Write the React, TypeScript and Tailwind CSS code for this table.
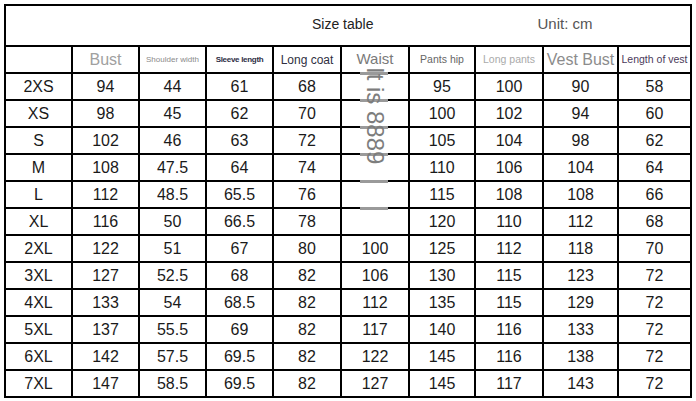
import React from "react";

const rows: (string | null)[][] = [
  ["2XS", "94", "44", "61", "68", null, "95", "100", "90", "58"],
  ["XS", "98", "45", "62", "70", null, "100", "102", "94", "60"],
  ["S", "102", "46", "63", "72", null, "105", "104", "98", "62"],
  ["M", "108", "47.5", "64", "74", null, "110", "106", "104", "64"],
  ["L", "112", "48.5", "65.5", "76", null, "115", "108", "108", "66"],
  ["XL", "116", "50", "66.5", "78", null, "120", "110", "112", "68"],
  ["2XL", "122", "51", "67", "80", "100", "125", "112", "118", "70"],
  ["3XL", "127", "52.5", "68", "82", "106", "130", "115", "123", "72"],
  ["4XL", "133", "54", "68.5", "82", "112", "135", "115", "129", "72"],
  ["5XL", "137", "55.5", "69", "82", "117", "140", "116", "133", "72"],
  ["6XL", "142", "57.5", "69.5", "82", "122", "145", "116", "138", "72"],
  ["7XL", "147", "58.5", "69.5", "82", "127", "145", "117", "143", "72"],
];

const barTops = [68, 95, 122, 149, 176, 203];

export default function App() {
  return (
    <div className="bg-white w-[696px] h-[401px] overflow-hidden font-['Liberation_Sans',Arial,sans-serif]">
      <div className="relative ml-[4px] mt-[4px] w-fit">
        <div className="grid grid-cols-[65px_65px_65px_65px_66px_66px_64px_66px_73px_71px] grid-rows-[39px_25px_repeat(12,25px)] gap-[2px] bg-black p-[2px]">
          <div className="col-span-10 bg-white flex items-center pb-[2px]">
            <span className="ml-[306px] text-[14px] text-[#222]">Size table</span>
            <span className="ml-[164px] text-[15px] text-[#555]">Unit: cm</span>
          </div>
          <div className="bg-white" />
          <div className="bg-white flex items-center justify-center text-[16px] text-[#a0a0a0]">Bust</div>
          <div className="bg-white flex items-center justify-center text-[8px] text-[#8a8a8a] whitespace-nowrap">Shoulder width</div>
          <div className="bg-white flex items-center justify-center text-[8px] font-semibold tracking-[-0.3px] text-[#2d2d44] whitespace-nowrap">Sleeve length</div>
          <div className="bg-white flex items-center justify-center text-[12px] text-[#2f2f3f] whitespace-nowrap">Long coat</div>
          <div className="bg-white flex items-center justify-center text-[15px] text-[#7a7a7a]">Waist</div>
          <div className="bg-white flex items-center justify-center text-[10.5px] text-[#666] whitespace-nowrap">Pants hip</div>
          <div className="bg-white flex items-center justify-center text-[10.5px] text-[#aaa] whitespace-nowrap">Long pants</div>
          <div className="bg-white flex items-center justify-center text-[16px] text-[#8c8c8c] whitespace-nowrap">Vest Bust</div>
          <div className="bg-white flex items-center justify-center text-[10.5px] text-[#4a3a5a] whitespace-nowrap">Length of vest</div>
          {rows.map((r, i) =>
            r.map((c, j) => (
              <div
                key={`${i}-${j}`}
                className="bg-white flex items-center justify-center text-[16px] text-[#1a1a1a]"
              >
                {c ?? ""}
              </div>
            ))
          )}
        </div>
        {barTops.map((t) => (
          <div
            key={t}
            className="absolute left-[356px] w-[28px] h-[3px] bg-[#9a9a9a]"
            style={{ top: t }}
          />
        ))}
        <div className="absolute left-[338px] top-[63px] w-[66px] flex justify-center">
          <span className="[writing-mode:vertical-rl] text-[24px] leading-none text-[#7d7d7d]">
            It is 8889
          </span>
        </div>
      </div>
    </div>
  );
}
